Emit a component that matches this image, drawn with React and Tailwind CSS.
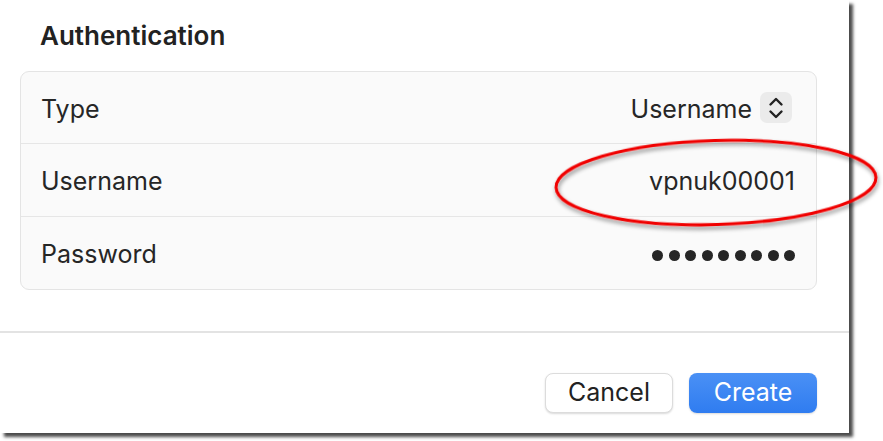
import React from 'react';

const Row = ({ label, height, children }) => (
  <div className={`flex items-center justify-between pl-5 pr-[21px] ${height}`}>
    <span className="translate-y-[1.5px] text-[25px] text-[#262626]">{label}</span>
    {children}
  </div>
);

const Stepper = () => (
  <div className="mr-[3px] flex h-[31px] w-[32px] items-center justify-center rounded-[7px] bg-[#ebebeb]">
    <svg width="16" height="24" viewBox="0 0 16 24" fill="none" stroke="#222" strokeWidth="2.4" strokeLinecap="round" strokeLinejoin="round">
      <path d="M2.5 8.5 8 3l5.5 5.5" />
      <path d="M2.5 15.5 8 21l5.5-5.5" />
    </svg>
  </div>
);

const App = () => {
  return (
    <div className="relative h-[441px] w-[883px] overflow-hidden bg-white font-['Inter',sans-serif]">
      <div className="h-[433px] w-[849px] bg-white shadow-[4px_4px_3px_rgba(0,0,0,0.7)]">
        <div className="pl-5 pr-8">
          {/* Section title */}
          <div className="flex h-[71px] items-center pl-5">
            <h2 className="text-[26px] font-semibold text-[#222]">Authentication</h2>
          </div>

          {/* Form card */}
          <div className="divide-y divide-[#e6e6e6] rounded-[9px] border border-[#e4e4e4] bg-[#fafafa]">
            <Row label="Type" height="h-[72px]">
              <div className="flex items-center gap-2">
                <span className="translate-y-[1.5px] text-[25px] text-[#262626]">Username</span>
                <Stepper />
              </div>
            </Row>
            <Row label="Username" height="h-[73px]">
              <span className="translate-y-[1.5px] text-[25px] text-[#262626]">vpnuk00001</span>
            </Row>
            <Row label="Password" height="h-[72px]">
              <div className="flex translate-y-[2px] items-center gap-[5.5px]">
                {[...Array(9)].map((_, i) => (
                  <div key={i} className="h-[11px] w-[11px] rounded-full bg-[#262626]"></div>
                ))}
              </div>
            </Row>
          </div>
        </div>

        <div className="mt-[41px] h-[2px] bg-[#e3e3e3]"></div>

        {/* Actions */}
        <div className="mt-[40px] flex justify-end gap-4 pr-8">
          <button className="h-[40px] w-[128px] rounded-[8px] border border-[#dcdcdc] bg-white text-[25px] text-[#222] shadow-[0_1px_2px_rgba(0,0,0,0.15)]">
            Cancel
          </button>
          <button className="h-[40px] w-[128px] rounded-[8px] bg-gradient-to-b from-[#4a90f5] to-[#2f7cf0] text-[25px] text-white shadow-[0_1px_2px_rgba(0,0,0,0.15)]">
            Create
          </button>
        </div>
      </div>

      {/* Red annotation ellipse */}
      <svg className="pointer-events-none absolute left-0 top-0" width="883" height="441">
        <defs>
          <filter id="sh" x="-10%" y="-30%" width="120%" height="160%">
            <feDropShadow dx="1" dy="3" stdDeviation="2" floodColor="#000" floodOpacity="0.45" />
          </filter>
        </defs>
        <ellipse cx="716" cy="182.5" rx="160" ry="42" transform="rotate(-1.8 716 182.5)" fill="none" stroke="#f00000" strokeWidth="3" filter="url(#sh)" />
      </svg>
    </div>
  );
};

export default App;
